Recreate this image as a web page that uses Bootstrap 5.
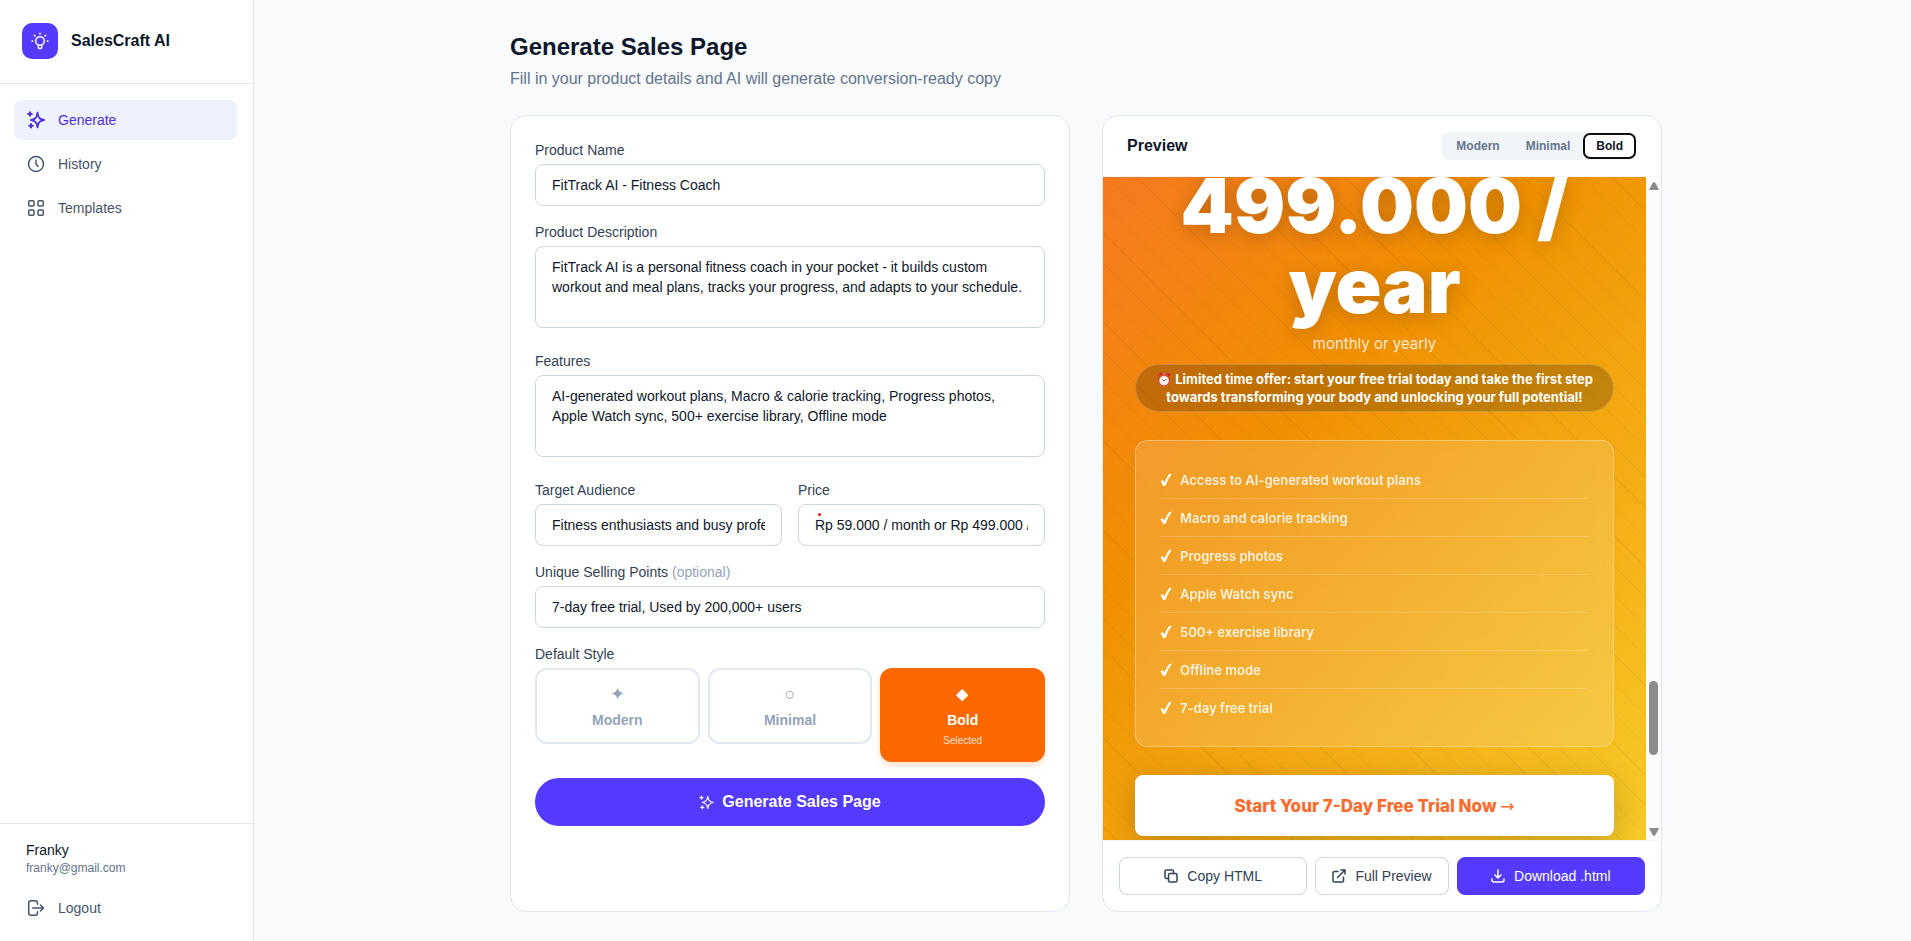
<!DOCTYPE html>
<html lang="en">
<head>
<meta charset="utf-8">
<meta name="viewport" content="width=device-width, initial-scale=1">
<title>SalesCraft AI – Generate Sales Page</title>
<link href="https://cdn.jsdelivr.net/npm/bootstrap@5.3.0/dist/css/bootstrap.min.css" rel="stylesheet">
<style>
:root { --accent: #533afd; --ink: #0f172a; --slate: #475569; --muted: #64748b; --line: #e2e8f0; --field-line: #cbd5e1; }
body { font-family: "Liberation Sans", Arial, sans-serif; font-size: 14px; line-height: 20px; color: var(--ink); background: #f8fafc; }
svg { fill: none; stroke: currentColor; stroke-width: 1.5; stroke-linecap: round; stroke-linejoin: round; flex: none; }
svg.bold-stroke { stroke-width: 2; }

/* sidebar */
.side { width: 254px; border-right: 1px solid var(--line); }
.side-head { height: 84px; padding: 0 22px 2px; border-bottom: 1px solid var(--line); gap: 13px; }
.logo { width: 36px; height: 36px; border-radius: 10px; background: var(--accent); }
.brand-name { font-size: 16px; line-height: 24px; }
.side-nav { padding: 16px 16px 16px 14px; gap: 4px; }
.side .nav-link { height: 40px; padding: 0 13px; gap: 13px; border-radius: 8px; color: var(--slate); }
.side .nav-link.active { background: #eef2ff; color: #4f2fdc; }
.side-foot { border-top: 1px solid var(--line); padding: 16px 16px 13px 14px; }
.user-box { padding: 0 12px; margin-bottom: 12px; }
.user-mail { font-size: 12px; line-height: 16px; color: var(--muted); }

/* main */
.main-area { padding: 31px 32px 29px 39px; }
.inner { max-width: 1152px; }
h1 { font-size: 24px; line-height: 32px; }
.subtitle { font-size: 16px; line-height: 24px; color: var(--muted); }
.panel-card { background: #fff; border: 1px solid var(--line); border-radius: 16px; }
.two-col { display: grid; grid-template-columns: minmax(0, 1fr) minmax(0, 1fr); gap: 32px; }

/* form */
.form-card { padding: 24px; }
.form-label { color: #334155; margin-bottom: 4px; }
.field { margin-bottom: 16px; }
.field-area { margin-bottom: 23px; }
.form-control { font-size: 14px; line-height: 20px; padding: 10px 16px; border-color: var(--field-line); border-radius: 8px; color: var(--ink); }
textarea.form-control { resize: none; }
.optional { color: #94a3b8; }
.tile { flex: 1 1 0; padding: 12px; border: 2px solid var(--line); border-radius: 12px; background: #fff; color: #94a3b8; font-weight: 700; }
.tile-glyph { font-size: 18px; line-height: 24px; margin-bottom: 4px; font-weight: 400; }
.tile-note { font-size: 10px; line-height: 14px; margin-top: 4px; font-weight: 400; opacity: .8; }
.tile.chosen { background: #fb6800; border-color: #fb6800; color: #fff; box-shadow: 0 4px 6px #fb680033; }
.btn-main { height: 48px; margin-top: 16px; background: var(--accent); color: #fff; font-size: 16px; font-weight: 700; gap: 8px; }
.error-dot { left: 20px; top: 9px; width: 3px; height: 3px; border-radius: 50%; background: #f01414; }

/* preview */
.preview-head { height: 61px; padding: 0 24px; border-bottom: 1px solid #f1f5f9; }
h2 { font-size: 16px; line-height: 24px; }
.seg { background: #f1f5f9; border-radius: 8px; padding: 2px; gap: 2px; }
.seg button { border: 0; background: none; height: 24px; padding: 0 12px; border-radius: 6px; font-size: 12px; line-height: 16px; font-weight: 700; color: var(--muted); }
.seg button.on { background: #fff; color: var(--ink); outline: 2px solid #101010; outline-offset: -1px; }
.stage { overflow: hidden; }
.sheet { font-family: Inter, sans-serif; padding: 0 32px; color: #fff; text-align: center;
  background: repeating-linear-gradient(45deg, transparent 0 9px, #0000000b 9px 10px, transparent 10px 21px), linear-gradient(135deg, #f5791f 0%, #f09000 36%, #f8ca28 100%); }
.price { font-size: 76px; line-height: 80px; font-weight: 900; margin: -12px 0 0; text-shadow: 0 4px 20px #00000033; }
.period { font-size: 15px; line-height: 24px; opacity: .8; margin-top: 7px; }
.offer { margin-top: 8px; padding: 5px 16px; border-radius: 24px; border: 1px solid #ffffff33; background: #00000033; font-size: 13px; line-height: 18px; font-weight: 700; }
.perks { margin: 28px 0 0; padding: 20px 24px; border-radius: 12px; border: 1px solid #ffffff4d; background: #ffffff26; backdrop-filter: blur(10px); list-style: none; text-align: left; font-size: 13px; font-weight: 600; color: #ffffffd9; }
.perks li { height: 38px; gap: 8px; border-bottom: 1px solid #ffffff26; }
.perks li:last-child { height: 37px; border-bottom: 0; }
.perks svg { fill: #fff; stroke: none; }
.cta { margin: 28px 0 4px; height: 61px; border: 0; border-radius: 8px; background: #fff; color: #ff6b2c; font-size: 17px; font-weight: 800; box-shadow: 0 8px 32px #00000033; }
.cta span { font-family: "DejaVu Sans", sans-serif; font-weight: 400; }
.scroll-track { width: 15px; background: #fcfcfc; padding: 5px 0 4px; }
.scroll-track svg { fill: #8b8b8b; stroke: none; }
.scroll-thumb { width: 9px; border-radius: 5px; background: #8b8b8b; margin-bottom: 73px; height: 74px; }
.preview-foot { padding: 16px; gap: 8px; border-top: 1px solid #f1f5f9; }
.preview-foot .btn { height: 38px; gap: 9px; border-radius: 8px; border: 1px solid var(--field-line); background: #fff; color: #334155; font-size: 14px; line-height: 20px; padding: 0 16px; }
.preview-foot .grow { flex: 1 1 0; }
.preview-foot .btn.solid { background: var(--accent); border-color: var(--accent); color: #fff; }
</style>
</head>
<body>
<svg class="d-none" aria-hidden="true">
  <symbol id="spark" viewBox="0 0 18 18"><path d="M10.500 1.800C11 6.500 12.500 8.300 17 9 12.500 9.700 11 11.500 10.500 16.200 10 11.500 8.500 9.700 4 9 8.500 8.300 10 6.500 10.500 1.800ZM3 1.200V4.800M1.200 3H4.800M4 13V16.600M2.200 14.800H5.800"/></symbol>
  <symbol id="tick" viewBox="0 0 12 14"><path d="M0.500 8.200L3 6.900Q4 8.200 4.300 9.800Q6.500 4 9.200 0.900L11.800 0.700Q7.800 5.800 5.700 12.600L3.200 13.200Q2.200 10 0.500 8.200Z"/></symbol>
</svg>
<div class="d-flex min-vh-100">
  <aside class="side bg-white d-flex flex-column flex-shrink-0">
    <div class="side-head d-flex align-items-center">
      <span class="logo d-flex align-items-center justify-content-center text-white">
        <svg width="18" height="18" viewBox="0 0 18 18"><circle cx="9" cy="9" r="4.300"/><path d="M7.300 13V15.500Q7.300 16.500 8.300 16.500H9.700Q10.700 16.500 10.700 15.500V13M9 1.200V2M3.300 3.300L4 4M14.700 3.300L14 4M1 9H1.800M16.200 9H17"/></svg>
      </span>
      <span class="brand-name fw-bold">SalesCraft AI</span>
    </div>
    <nav class="nav side-nav flex-column">
      <a class="nav-link active d-flex align-items-center" href="#"><svg class="bold-stroke" width="18" height="18"><use href="#spark"/></svg>Generate</a>
      <a class="nav-link d-flex align-items-center" href="#"><svg width="18" height="18" viewBox="0 0 18 18"><circle cx="9" cy="9" r="7.500"/><path d="M9 5V9L11 11.500"/></svg>History</a>
      <a class="nav-link d-flex align-items-center" href="#"><svg width="18" height="18" viewBox="0 0 18 18"><rect x="1.750" y="1.750" width="5.250" height="5.250" rx="1"/><rect x="11" y="1.750" width="5.250" height="5.250" rx="1"/><rect x="1.750" y="11" width="5.250" height="5.250" rx="1"/><rect x="11" y="11" width="5.250" height="5.250" rx="1"/></svg>Templates</a>
    </nav>
    <div class="side-foot mt-auto">
      <div class="user-box">
        <div>Franky</div>
        <div class="user-mail">franky@gmail.com</div>
      </div>
      <a class="nav-link d-flex align-items-center" href="#"><svg width="18" height="18" viewBox="0 0 18 18"><path d="M10.500 5.200V4Q10.500 1.700 8.200 1.700H4Q1.700 1.700 1.700 4V14Q1.700 16.300 4 16.300H8.200Q10.500 16.300 10.500 14V12.800M5.500 9H16.500M13.500 6L16.500 9 13.500 12"/></svg>Logout</a>
    </div>
  </aside>

  <main class="main-area flex-grow-1 d-flex">
    <div class="inner mx-auto w-100 d-flex flex-column">
      <h1 class="fw-bold mb-1">Generate Sales Page</h1>
      <p class="subtitle mb-4">Fill in your product details and AI will generate conversion-ready copy</p>
      <div class="two-col flex-grow-1">
        <form class="panel-card form-card">
          <div class="field">
            <label class="form-label d-block" for="pname">Product Name</label>
            <input class="form-control" id="pname" type="text" value="FitTrack AI - Fitness Coach">
          </div>
          <div class="field-area">
            <label class="form-label d-block" for="pdesc">Product Description</label>
            <textarea class="form-control d-block" id="pdesc" rows="3">FitTrack AI is a personal fitness coach in your pocket - it builds custom workout and meal plans, tracks your progress, and adapts to your schedule.</textarea>
          </div>
          <div class="field-area">
            <label class="form-label d-block" for="pfeat">Features</label>
            <textarea class="form-control d-block" id="pfeat" rows="3">AI-generated workout plans, Macro &amp; calorie tracking, Progress photos, Apple Watch sync, 500+ exercise library, Offline mode</textarea>
          </div>
          <div class="row gx-3 field">
            <div class="col-6">
              <label class="form-label d-block" for="paud">Target Audience</label>
              <input class="form-control" id="paud" type="text" value="Fitness enthusiasts and busy professionals">
            </div>
            <div class="col-6">
              <label class="form-label d-block" for="pprice">Price</label>
              <div class="position-relative">
                <input class="form-control" id="pprice" type="text" value="Rp 59.000 / month or Rp 499.000 / year">
                <span class="error-dot position-absolute" aria-hidden="true"></span>
              </div>
            </div>
          </div>
          <div class="field">
            <label class="form-label d-block" for="pusp">Unique Selling Points <span class="optional">(optional)</span></label>
            <input class="form-control" id="pusp" type="text" value="7-day free trial, Used by 200,000+ users">
          </div>
          <div class="form-label">Default Style</div>
          <div class="d-flex align-items-start gap-2">
            <button type="button" class="tile"><div class="tile-glyph">✦</div><div>Modern</div></button>
            <button type="button" class="tile"><div class="tile-glyph">○</div><div>Minimal</div></button>
            <button type="button" class="tile chosen"><div class="tile-glyph">⬥</div><div>Bold</div><div class="tile-note">Selected</div></button>
          </div>
          <button type="submit" class="btn btn-main rounded-pill w-100 d-flex align-items-center justify-content-center"><svg width="15" height="15"><use href="#spark"/></svg>Generate Sales Page</button>
        </form>

        <section class="panel-card overflow-hidden d-flex flex-column">
          <div class="preview-head d-flex align-items-center justify-content-between">
            <h2 class="fw-bold mb-0">Preview</h2>
            <div class="seg d-flex">
              <button type="button">Modern</button>
              <button type="button">Minimal</button>
              <button type="button" class="on">Bold</button>
            </div>
          </div>
          <div class="stage d-flex flex-grow-1">
            <div class="sheet flex-grow-1">
              <div class="price">499.000 /<br>year</div>
              <div class="period">monthly or yearly</div>
              <div class="offer">⏰ Limited time offer: start your free trial today and take the first step towards transforming your body and unlocking your full potential!</div>
              <ul class="perks">
                <li class="d-flex align-items-center"><svg width="12" height="14"><use href="#tick"/></svg>Access to AI-generated workout plans</li>
                <li class="d-flex align-items-center"><svg width="12" height="14"><use href="#tick"/></svg>Macro and calorie tracking</li>
                <li class="d-flex align-items-center"><svg width="12" height="14"><use href="#tick"/></svg>Progress photos</li>
                <li class="d-flex align-items-center"><svg width="12" height="14"><use href="#tick"/></svg>Apple Watch sync</li>
                <li class="d-flex align-items-center"><svg width="12" height="14"><use href="#tick"/></svg>500+ exercise library</li>
                <li class="d-flex align-items-center"><svg width="12" height="14"><use href="#tick"/></svg>Offline mode</li>
                <li class="d-flex align-items-center"><svg width="12" height="14"><use href="#tick"/></svg>7-day free trial</li>
              </ul>
              <button type="button" class="cta w-100">Start Your 7-Day Free Trial Now <span>→</span></button>
            </div>
            <div class="scroll-track d-flex flex-column align-items-center flex-shrink-0" aria-hidden="true">
              <svg width="10" height="8" viewBox="0 0 10 8"><path d="M5 0Q6 0 7 2L10 8H0L3 2Q4 0 5 0Z"/></svg>
              <span class="scroll-thumb mt-auto"></span>
              <svg width="10" height="8" viewBox="0 0 10 8"><path d="M5 8Q6 8 7 6L10 0H0L3 6Q4 8 5 8Z"/></svg>
            </div>
          </div>
          <div class="preview-foot d-flex">
            <button type="button" class="btn grow d-flex align-items-center justify-content-center"><svg width="14" height="14" viewBox="0 0 14 14"><rect x="4.500" y="4.500" width="8.500" height="8.500" rx="1.500"/><path d="M9.500 4.500V2.500Q9.500 1 8 1H2.500Q1 1 1 2.500V8Q1 9.500 2.500 9.500H4.500"/></svg>Copy HTML</button>
            <button type="button" class="btn d-flex align-items-center justify-content-center"><svg width="14" height="14" viewBox="0 0 14 14"><path d="M6 2.500H2.500Q1 2.500 1 4V11.500Q1 13 2.500 13H10Q11.500 13 11.500 11.500V8M5.500 8.500L12.800 1.200M9 1H13V5"/></svg>Full Preview</button>
            <button type="button" class="btn grow solid d-flex align-items-center justify-content-center"><svg width="14" height="14" viewBox="0 0 14 14"><path d="M7 1V9M4 6L7 9 10 6M1 10V11Q1 13 3 13H11Q13 13 13 11V10"/></svg>Download .html</button>
          </div>
        </section>
      </div>
    </div>
  </main>
</div>
<script src="https://cdn.jsdelivr.net/npm/bootstrap@5.3.0/dist/js/bootstrap.bundle.min.js"></script>
</body>
</html>
